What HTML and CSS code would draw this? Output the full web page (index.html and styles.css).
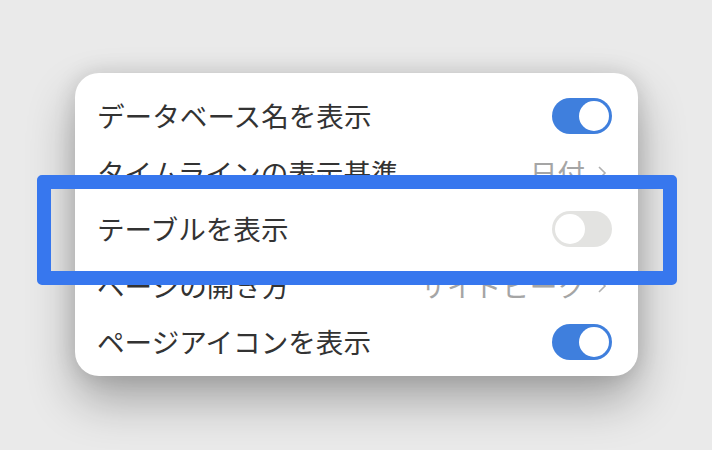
FILE: index.html
```html
<!DOCTYPE html>
<html lang="ja">
<head>
  <meta charset="UTF-8" />
  <title>表示設定</title>
  <link rel="stylesheet" href="styles.css">
</head>
<body>
  <div class="stage">
    <div class="settings-card">
      <!-- Database name -->
      <div class="row">
        <span class="label">データベース名を表示</span>
        <span class="toggle on"><span class="knob"></span></span>
      </div>

      <!-- Timeline basis -->
      <div class="row">
        <span class="label">タイムラインの表示基準</span>
        <span class="value">日付
          <svg class="chevron" viewBox="0 0 10 16"><polyline points="2,2 8,8 2,14" /></svg>
        </span>
      </div>

      <!-- Table -->
      <div class="row">
        <span class="label">テーブルを表示</span>
        <span class="toggle"><span class="knob"></span></span>
      </div>

      <!-- Open pages -->
      <div class="row">
        <span class="label">ページの開き方</span>
        <span class="value">サイドピーク
          <svg class="chevron" viewBox="0 0 10 16"><polyline points="2,2 8,8 2,14" /></svg>
        </span>
      </div>

      <!-- Page icon -->
      <div class="row">
        <span class="label">ページアイコンを表示</span>
        <span class="toggle on"><span class="knob"></span></span>
      </div>

      <div class="highlight"></div>
    </div>
  </div>
</body>
</html>
```

FILE: styles.css
```css
/* Basic Reset & Body */
* {
  margin: 0;
  padding: 0;
  box-sizing: border-box;
}
body {
  font-family: "Noto Sans CJK JP", "Noto Sans", sans-serif;
  background: #eaeaea;
  width: 712px;
  height: 450px;
  overflow: hidden;
  color: #333;
}

/* Stage */
.stage {
  padding: 73px 0 0 75px;
}

/* Card */
.settings-card {
  position: relative;
  width: 563px;
  height: 303px;
  background: #fff;
  border-radius: 24px;
  padding: 15px 26px 6px 22px;
  box-shadow: 0 24px 48px rgba(0,0,0,0.3), 0 0 22px rgba(0,0,0,0.12);
}

/* Rows */
.row {
  height: 56.5px;
  display: flex;
  align-items: center;
  justify-content: space-between;
}
.label {
  font-size: 27.6px;
  line-height: 1;
  color: #333;
}
.value {
  display: flex;
  align-items: center;
  gap: 12px;
  font-size: 27.6px;
  line-height: 1;
  color: #a5a5a5;
  padding-right: 5px;
}
.chevron {
  width: 10px;
  height: 16px;
  fill: none;
  stroke: #b0b0b0;
  stroke-width: 1.6;
}

/* Toggle */
.toggle {
  width: 60px;
  height: 36px;
  border-radius: 18px;
  background: #e3e3e1;
  padding: 3px;
  display: flex;
  justify-content: flex-start;
}
.toggle.on {
  background: #3f7fdd;
  justify-content: flex-end;
}
.knob {
  width: 30px;
  height: 30px;
  border-radius: 50%;
  background: #fff;
}

/* Highlight box */
.highlight {
  position: absolute;
  left: -38px;
  top: 102px;
  width: 640px;
  height: 110px;
  border: 14px solid #3777ee;
  border-radius: 5px;
}
```
